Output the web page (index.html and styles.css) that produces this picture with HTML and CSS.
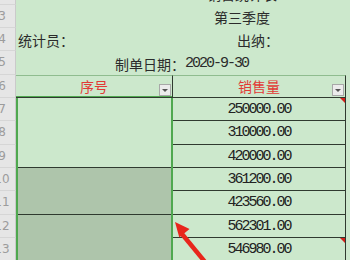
FILE: index.html
```html
<!DOCTYPE html>
<html>
<head>
  <meta charset="utf-8">
  <title>销售统计表</title>
  <link rel="stylesheet" href="styles.css">
</head>
<body>
  <div class="sheet">
    <!-- row headers -->
    <div class="rh" style="grid-row: 1"><span>2</span></div>
    <div class="rh" style="grid-row: 2"><span>3</span></div>
    <div class="rh" style="grid-row: 3"><span>4</span></div>
    <div class="rh" style="grid-row: 4"><span>5</span></div>
    <div class="rh" style="grid-row: 5"><span>6</span></div>
    <div class="rh" style="grid-row: 6"><span>7</span></div>
    <div class="rh" style="grid-row: 7"><span>8</span></div>
    <div class="rh" style="grid-row: 8"><span>9</span></div>
    <div class="rh" style="grid-row: 9"><span>10</span></div>
    <div class="rh" style="grid-row: 10"><span>11</span></div>
    <div class="rh" style="grid-row: 11"><span>12</span></div>
    <div class="rh" style="grid-row: 12"><span>13</span></div>
    <div class="rh" style="grid-row: 13"><span>14</span></div>

    <!-- report heading -->
    <div class="cell title">销售统计表</div>
    <div class="cell quarter">第三季度</div>
    <div class="cell staff">统计员：</div>
    <div class="cell cashier">出纳：</div>
    <div class="cell date">制单日期：<span class="num">2020-9-30</span></div>

    <!-- table header -->
    <div class="cell head col-a">序号<span class="filter"></span></div>
    <div class="cell head col-b">销售量<span class="filter"></span></div>

    <!-- serial number column, merged cells -->
    <div class="cell col-a merged first" style="grid-row: 6 / span 3"></div>
    <div class="cell col-a merged shaded" style="grid-row: 9 / span 2"></div>
    <div class="cell col-a merged shaded" style="grid-row: 11 / span 2"></div>
    <div class="cell col-a merged shaded" style="grid-row: 13 / span 2"></div>

    <!-- sales column -->
    <div class="cell col-b value note" style="grid-row: 6"><span class="num">250000.00</span></div>
    <div class="cell col-b value" style="grid-row: 7"><span class="num">310000.00</span></div>
    <div class="cell col-b value" style="grid-row: 8"><span class="num">420000.00</span></div>
    <div class="cell col-b value" style="grid-row: 9"><span class="num">361200.00</span></div>
    <div class="cell col-b value" style="grid-row: 10"><span class="num">423560.00</span></div>
    <div class="cell col-b value" style="grid-row: 11"><span class="num">562301.00</span></div>
    <div class="cell col-b value note" style="grid-row: 12"><span class="num">546980.00</span></div>
    <div class="cell col-b value" style="grid-row: 13"><span class="num">490000.00</span></div>

    <!-- selected range outline -->
    <div class="selection"></div>

    <svg class="pointer" width="60" height="60" viewBox="0 0 60 60">
      <line x1="12" y1="14" x2="40" y2="48" stroke="#e8261c" stroke-width="4.5"/>
      <polygon points="5,2 19.5,9 9.3,17.6" fill="#e8261c"/>
    </svg>
  </div>
</body>
</html>
```

FILE: styles.css
```css
body {
    margin: 0;
    padding: 0;
    width: 350px;
    height: 260px;
    overflow: hidden;
    background-color: #cce8cc;
    font-family: "Noto Sans CJK SC", sans-serif;
    font-size: 14px;
    color: #2b2b2b;
}

.sheet {
    position: relative;
    display: grid;
    grid-template-columns: 16px 157px 173px 120px;
    grid-template-rows: repeat(13, 23.333px);
    margin-top: -18.667px;
}

/* row numbers on the left */
.rh {
    grid-column: 1;
    box-sizing: border-box;
    display: flex;
    align-items: center;
    overflow: hidden;
    background-color: #e6e6e6;
    border-right: 1px solid #cacaca;
    border-bottom: 1px solid #d6d6d6;
    font-family: "DejaVu Sans", sans-serif;
    font-size: 12px;
    color: #9c9c9c;
}

.rh span {
    flex: none;
    width: 26px;
    margin-left: -11px;
    text-align: center;
}

.cell {
    box-sizing: border-box;
    display: flex;
    align-items: flex-end;
    line-height: 16px;
    padding-bottom: 3px;
    white-space: nowrap;
}

.num {
    font-family: "Liberation Mono", monospace;
    font-size: 15px;
    letter-spacing: -2px;
}

.title {
    grid-row: 1;
    grid-column: 2 / span 3;
    justify-content: center;
    padding-left: 2px;
}

.quarter {
    grid-row: 2;
    grid-column: 2 / span 3;
    justify-content: center;
    padding-left: 2px;
}

.staff {
    grid-row: 3;
    grid-column: 2;
    padding-left: 2px;
}

.cashier {
    grid-row: 3;
    grid-column: 3;
    padding-left: 64px;
}

.date {
    grid-row: 4;
    grid-column: 2 / span 3;
    padding-left: 99px;
}

.col-a {
    grid-column: 2;
    border-right: 1px solid #2f3a2f;
}

.col-b {
    grid-column: 3;
    border-right: 1px solid #2f3a2f;
}

.head {
    grid-row: 5;
    position: relative;
    justify-content: center;
    border-top: 1px solid #8fbc8f;
    border-bottom: 1px solid #2f3a2f;
    color: #e23a36;
}

/* autofilter dropdown */
.filter {
    position: absolute;
    right: 1px;
    bottom: 1px;
    box-sizing: border-box;
    width: 12px;
    height: 12px;
    background-color: #ececec;
    border: 1px solid #a8a8a8;
}

.filter::after {
    content: "";
    position: absolute;
    left: 2px;
    top: 4px;
    border-left: 3px solid transparent;
    border-right: 3px solid transparent;
    border-top: 3px solid #555;
}

.merged {
    border-bottom: 1px solid #2f3a2f;
}

.shaded {
    background-color: #aec5ab;
}

.value {
    justify-content: center;
    align-items: center;
    padding-bottom: 0;
    padding-top: 2px;
    border-bottom: 1px solid #2f3a2f;
    color: #222;
}

/* comment marker in the cell corner */
.note {
    position: relative;
}

.note::after {
    content: "";
    position: absolute;
    top: 0;
    right: 0;
    border-left: 5px solid transparent;
    border-top: 5px solid #d4201a;
}

.selection {
    grid-column: 2;
    grid-row: 6 / span 8;
    margin-top: -2px;
    margin-left: 0;
    border: 2px solid #4fa84f;
    pointer-events: none;
}

.pointer {
    position: absolute;
    left: 170px;
    top: 239px;
}
```
